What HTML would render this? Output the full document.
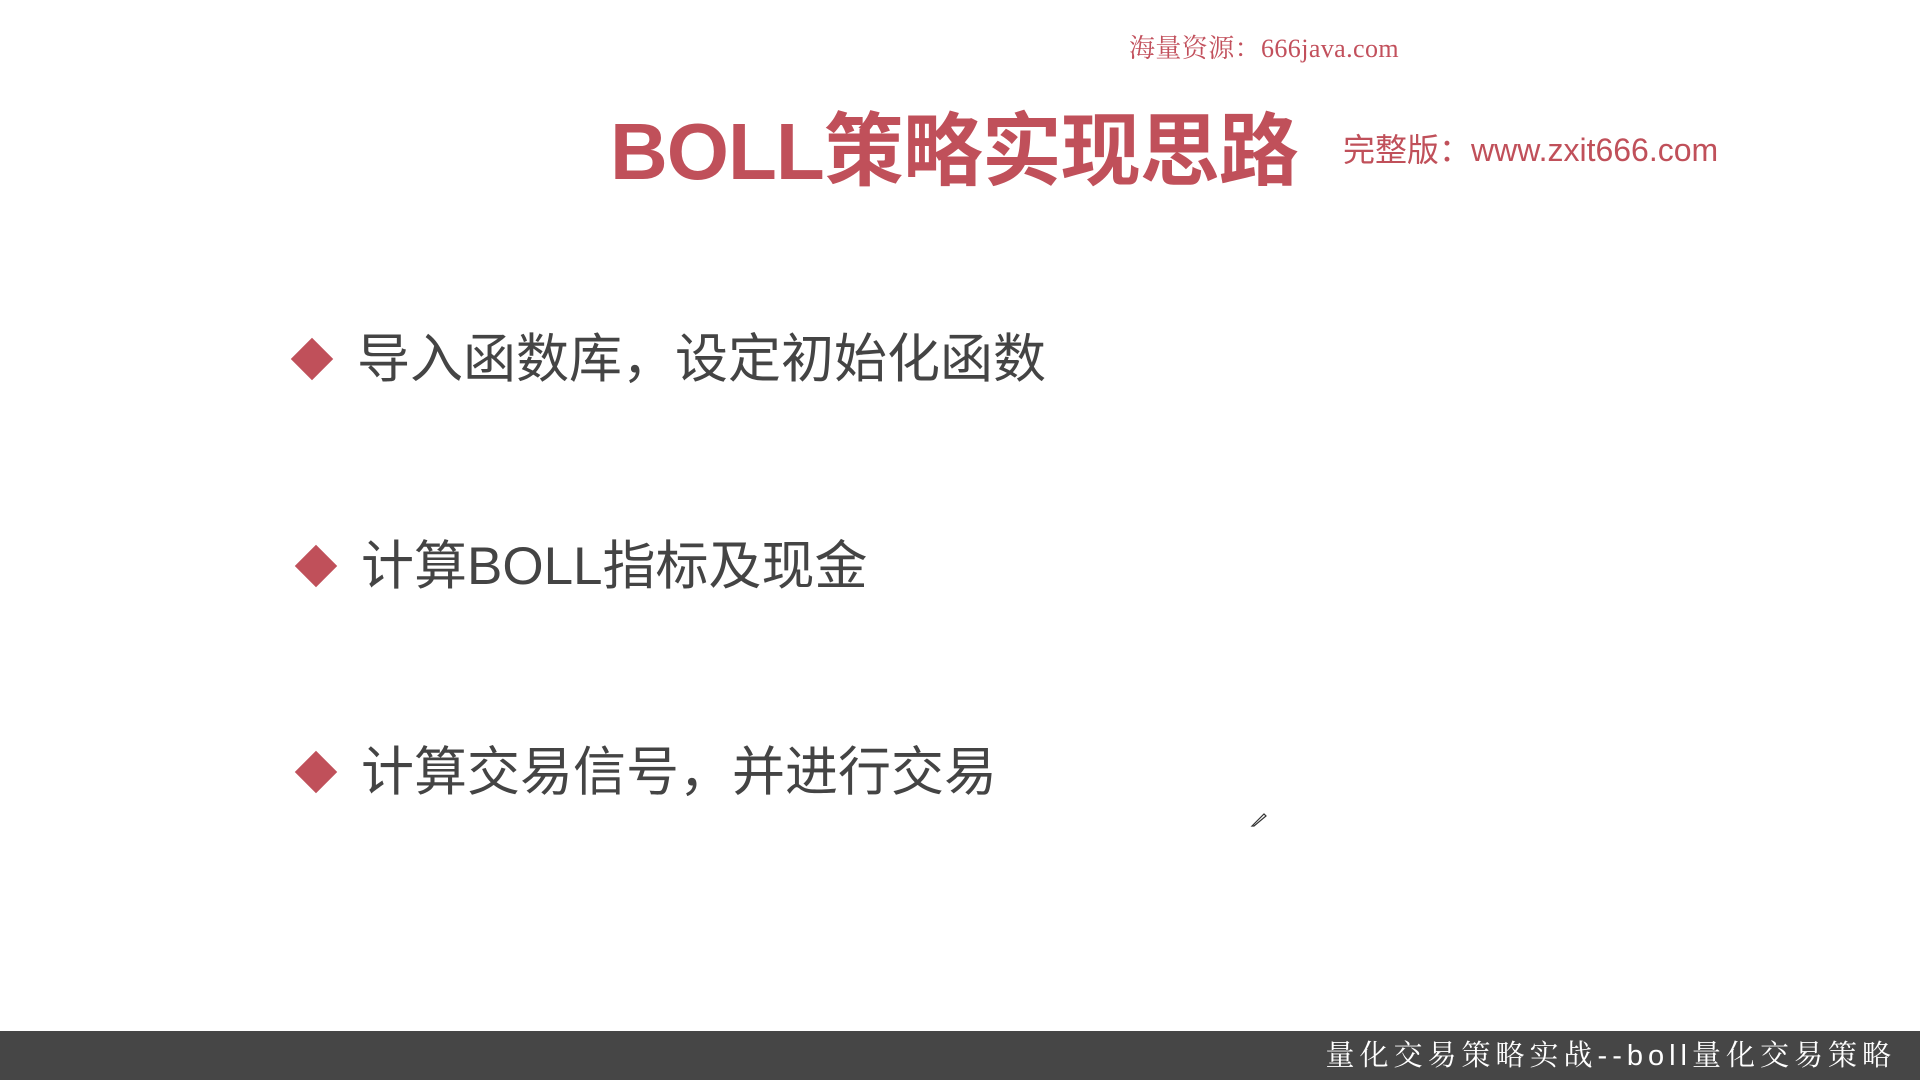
<!DOCTYPE html>
<html><head><meta charset="utf-8"><style>
html,body{margin:0;padding:0;}
body{width:1920px;height:1080px;background:#fff;position:relative;overflow:hidden;font-family:"Liberation Sans","Noto Sans CJK SC",sans-serif;}
.abs{position:absolute;white-space:nowrap;}
.wm{left:1129px;top:32px;font-size:26px;color:#c2505c;font-family:"Liberation Serif","Noto Serif CJK SC",serif;line-height:34px;letter-spacing:0.4px;}
.title{left:610px;top:104px;font-size:80px;font-weight:bold;color:#c0505a;line-height:96px;letter-spacing:-1px;}
.full{left:1343px;top:130px;font-size:32px;color:#c0505a;line-height:40px;}
.dia{width:30px;height:30px;background:#c0505a;transform:rotate(45deg);}
.item{font-size:53px;color:#444;line-height:64px;}
.bar{left:0;top:1031px;width:1920px;height:49px;background:#464646;}
.bt{right:24px;top:1036px;font-size:29px;color:#fff;line-height:40px;letter-spacing:5px;font-family:"Liberation Sans","Noto Serif CJK SC",serif;}
</style></head><body>
<div class="abs wm">海量资源：666java.com</div>
<div class="abs title">BOLL策略实现思路</div>
<div class="abs full">完整版：www.zxit666.com</div>

<div class="abs dia" style="left:297px;top:344px"></div>
<div class="abs item" style="left:357px;top:328px">导入函数库，设定初始化函数</div>

<div class="abs dia" style="left:301px;top:551px"></div>
<div class="abs item" style="left:361px;top:535px">计算BOLL指标及现金</div>

<div class="abs dia" style="left:301px;top:757px"></div>
<div class="abs item" style="left:361px;top:741px">计算交易信号，并进行交易</div>

<svg class="abs" style="left:1250px;top:810px" width="18" height="18" viewBox="0 0 18 18"><path d="M2 16 L14 4 L16 6 L4 16 Z" fill="none" stroke="#333" stroke-width="1.2"/></svg>

<div class="abs bar"></div>
<div class="abs bt">量化交易策略实战--boll量化交易策略</div>
</body></html>
